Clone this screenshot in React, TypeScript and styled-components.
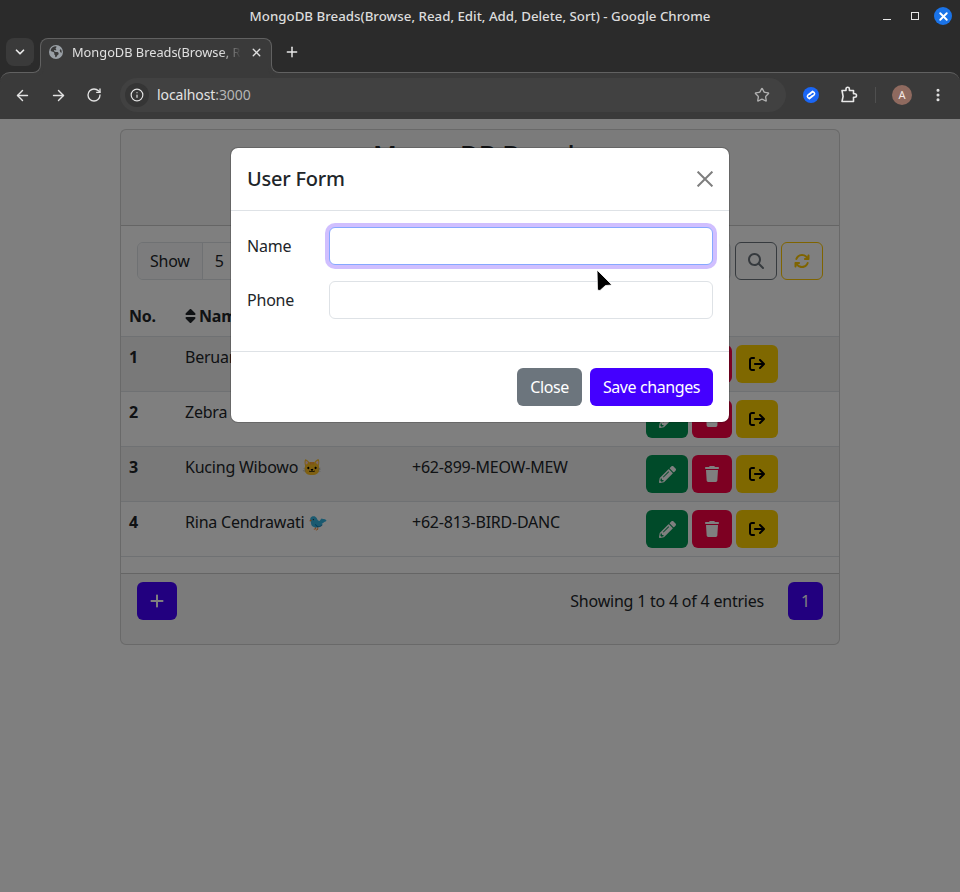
import styled, { createGlobalStyle } from 'styled-components';
import { FaPencilAlt } from 'react-icons/fa';
import { FaArrowRightFromBracket, FaArrowsRotate, FaEarthAmericas, FaMagnifyingGlass, FaPlus, FaSort, FaTrash } from 'react-icons/fa6';
import { ArrowLeft, ArrowRight, ChevronDown, EllipsisVertical, Info, Plus, RotateCw, Star, X } from 'lucide-react';

const GlobalStyle = createGlobalStyle`
  html, body {
    margin: 0;
    height: 100%;
    overflow: hidden;
  }
  body {
    font-family: "Noto Sans", "Open Sans", sans-serif;
    font-size: 16px;
    line-height: 24px;
    letter-spacing: -0.22px;
    color: #212529;
    background: #fff;
  }
  * {
    box-sizing: border-box;
  }
`;

const Shell = styled.div`
  display: flex;
  flex-direction: column;
  height: 892px;
`;

const BrowserChrome = styled.header`
  height: 119px;
  flex: none;
  background: #2b2b2b;
  color: #e3e3e3;
  display: flex;
  flex-direction: column;
  letter-spacing: 0;
`;

const TitleBar = styled.div`
  height: 38px;
  flex: none;
  display: grid;
  grid-template-columns: 1fr auto 1fr;
  align-items: center;
  padding: 0 8px 6px;
  font-size: 13.3px;
  font-weight: 500;
  color: #dcdcdc;
`;

const WindowTitle = styled.div`
  grid-column: 2;
  white-space: nowrap;
`;

const WindowControls = styled.div`
  grid-column: 3;
  justify-self: end;
  display: flex;
  align-items: center;
`;

const MinimizeIcon = styled.span`
  width: 8px;
  height: 1px;
  background: #e8e8e8;
  margin: 7px 20px 0 0;
`;

const MaximizeIcon = styled.span`
  width: 8px;
  height: 8px;
  border: 1px solid #e8e8e8;
  margin-right: 15px;
`;

const CloseWindow = styled.span`
  width: 18px;
  height: 18px;
  border-radius: 50%;
  background: #1a73e8;
  color: #fff;
  display: flex;
  align-items: center;
  justify-content: center;
`;

const TabStrip = styled.div`
  height: 34px;
  flex: none;
  display: flex;
  align-items: flex-start;
  padding-left: 6px;
  position: relative;
  z-index: 1;
`;

const TabListButton = styled.span`
  width: 28px;
  height: 28px;
  border-radius: 8px;
  background: #3a3a3a;
  color: #e8e8e8;
  display: flex;
  align-items: center;
  justify-content: center;
  margin-right: 6px;
`;

const Tab = styled.div`
  width: 232px;
  height: 35px;
  position: relative;
  background: #3a3a3a;
  border: 1px solid #616161;
  border-bottom: 0;
  border-radius: 8px 8px 0 0;
  display: flex;
  align-items: center;
  gap: 9px;
  padding: 0 8px 8px 8px;
  font-size: 12.8px;
  color: #e0e0e0;

  &::before,
  &::after {
    content: '';
    position: absolute;
    bottom: 0;
    width: 9px;
    height: 9px;
    background: #2b2b2b;
    border: 0 solid #616161;
    border-bottom-width: 1px;
  }
  &::before {
    left: -10px;
    border-right-width: 1px;
    border-bottom-right-radius: 8px;
    box-shadow: 3px 3px 0 #3a3a3a;
  }
  &::after {
    right: -10px;
    border-left-width: 1px;
    border-bottom-left-radius: 8px;
    box-shadow: -3px 3px 0 #3a3a3a;
  }
`;

const TabTitle = styled.span`
  flex: 1;
  overflow: hidden;
  white-space: nowrap;
  -webkit-mask-image: linear-gradient(to right, #000 88%, transparent 100%);
  mask-image: linear-gradient(to right, #000 88%, transparent 100%);
`;

const NewTab = styled.span`
  margin: 6px 0 0 12px;
  display: flex;
  color: #e8e8e8;
`;

const Toolbar = styled.div`
  height: 47px;
  flex: none;
  background: #3a3a3a;
  border-top: 1px solid #616161;
  border-radius: 10px 10px 0 0;
  display: flex;
  align-items: center;
  padding: 0 14px 2px 14px;
  color: #e3e3e3;
`;

const NavIcons = styled.div`
  display: flex;
  align-items: center;
  gap: 19px;
  margin-right: 18px;
`;

const Omnibox = styled.div`
  width: 666px;
  height: 34px;
  border-radius: 17px;
  background: #414141;
  display: flex;
  align-items: center;
  padding: 0 16px 0 5px;
  font-size: 14px;
  color: #e3e3e3;
`;

const InfoChip = styled.span`
  width: 24px;
  height: 24px;
  border-radius: 50%;
  background: #353535;
  display: flex;
  align-items: center;
  justify-content: center;
  margin-right: 8px;
`;

const Url = styled.span`
  flex: 1;
  letter-spacing: -0.1px;
  span {
    color: #b5b5b5;
  }
`;

const Extensions = styled.div`
  flex: 1;
  display: flex;
  align-items: center;
  justify-content: flex-end;
`;

const ExtensionSlot = styled.span<{ $gap: number }>`
  display: flex;
  align-items: center;
  margin-right: ${(p) => p.$gap}px;
`;

const Divider = styled.span`
  width: 1px;
  height: 16px;
  background: #4f4f4f;
`;

const Avatar = styled.span`
  width: 20px;
  height: 20px;
  border-radius: 50%;
  background: #8f6a5f;
  color: #f4e8e4;
  font-size: 11px;
  display: flex;
  align-items: center;
  justify-content: center;
`;

const PageArea = styled.main`
  flex: 1;
  position: relative;
  overflow: hidden;
  padding-top: 10px;
`;

const Card = styled.section`
  width: 720px;
  margin: 0 auto;
  border: 1px solid rgba(0, 0, 0, 0.175);
  border-radius: 6px;
`;

const CardHeader = styled.div`
  height: 96px;
  padding: 6px 16px;
  background: rgba(0, 0, 0, 0.03);
  border-bottom: 1px solid rgba(0, 0, 0, 0.175);
  text-align: center;
  h2 {
    margin: 0;
    font-size: 26px;
    font-weight: 500;
    line-height: 36px;
  }
`;

const CardBody = styled.div`
  padding-top: 16px;
`;

const Controls = styled.div`
  display: flex;
  justify-content: space-between;
  padding: 0 16px;
  margin-bottom: 16px;
`;

const InputGroup = styled.div`
  display: flex;
  height: 38px;
  border: 1px solid #dee2e6;
  border-radius: 6px;
  overflow: hidden;
`;

const GroupText = styled.span<{ $shaded?: boolean }>`
  padding: 6px 12px;
  background: ${(p) => (p.$shaded ? '#f8f9fa' : 'transparent')};
  border-right: 1px solid #dee2e6;
`;

const SearchRow = styled.div`
  display: flex;
  gap: 4px;
`;

const SearchInput = styled.div`
  width: 240px;
  height: 38px;
  border: 1px solid #dee2e6;
  border-radius: 6px;
`;

const OutlineButton = styled.button<{ $color: string }>`
  width: 42px;
  height: 38px;
  padding: 0;
  background: transparent;
  border: 1px solid ${(p) => p.$color};
  border-radius: 6px;
  color: ${(p) => p.$color};
  display: flex;
  align-items: center;
  justify-content: center;
  font-size: 16px;
`;

const Table = styled.table`
  width: 100%;
  border-collapse: collapse;
  table-layout: fixed;
  margin-bottom: 16px;
  color: #212529;
  th, td {
    padding: 8px;
    border-bottom: 1px solid #dee2e6;
    text-align: left;
    vertical-align: top;
  }
  th {
    font-weight: 700;
  }
  tbody tr:nth-child(odd) td {
    background: rgba(0, 0, 0, 0.05);
  }
  td:first-child {
    font-weight: 700;
  }
`;

const SortIcon = styled(FaSort)`
  width: 11px;
  height: 16px;
  vertical-align: -2px;
  margin-right: 3px;
`;

const Actions = styled.div`
  display: flex;
  gap: 4px;
`;

const SolidButton = styled.button<{ $bg: string; $fg?: string; $width?: number }>`
  width: ${(p) => p.$width ?? 42}px;
  height: 38px;
  padding: 0;
  background: ${(p) => p.$bg};
  color: ${(p) => p.$fg ?? '#fff'};
  border: 0;
  border-radius: 6px;
  display: flex;
  align-items: center;
  justify-content: center;
  font: inherit;
`;

const CardFooter = styled.div`
  height: 71px;
  background: rgba(0, 0, 0, 0.03);
  border-top: 1px solid rgba(0, 0, 0, 0.175);
  padding: 8px 16px 24px;
  display: flex;
  align-items: center;
  justify-content: space-between;
`;

const PageInfo = styled.div`
  display: flex;
  align-items: center;
  gap: 24px;
`;

const Backdrop = styled.div`
  position: absolute;
  inset: 0;
  background: rgba(0, 0, 0, 0.5);
`;

const Modal = styled.div`
  width: 500px;
  margin: 28px auto 0;
  background: #fff;
  border: 1px solid rgba(0, 0, 0, 0.175);
  border-radius: 8px;
  background-clip: padding-box;
`;

const ModalHeader = styled.div`
  height: 63px;
  padding: 16px;
  display: flex;
  align-items: center;
  justify-content: space-between;
  border-bottom: 1px solid #dee2e6;
  h5 {
    margin: 0;
    font-size: 20px;
    font-weight: 500;
    line-height: 30px;
  }
`;

const CloseIcon = styled.svg`
  width: 16px;
  height: 16px;
  opacity: 0.5;
`;

const ModalBody = styled.div`
  padding: 16px 16px 0;
  height: 141px;
  border-bottom: 1px solid #dee2e6;
`;

const FormRow = styled.div`
  display: grid;
  grid-template-columns: 82px 1fr;
  align-items: center;
  margin-bottom: 16px;
`;

const Field = styled.input<{ $focused?: boolean }>`
  height: 38px;
  width: 100%;
  border-radius: 6px;
  outline: 0;
  border: 1px solid ${(p) => (p.$focused ? '#86a8ff' : '#dee2e6')};
  box-shadow: ${(p) => (p.$focused ? '0 0 0 4px rgba(68, 0, 255, 0.25)' : 'none')};
`;

const ModalFooter = styled.div`
  padding: 16px;
  display: flex;
  justify-content: flex-end;
  gap: 8px;
`;

const TextButton = styled.button<{ $bg: string; $width: number }>`
  height: 38px;
  width: ${(p) => p.$width}px;
  padding: 0;
  background: ${(p) => p.$bg};
  color: #fff;
  border: 0;
  border-radius: 6px;
  font: inherit;
  letter-spacing: -0.4px;
`;

const Cursor = styled.svg`
  position: absolute;
  left: 595px;
  top: 149px;
  width: 20px;
  height: 24px;
`;

const users = [
  { name: 'Beruang', phone: '' },
  { name: 'Zebra', phone: '' },
  { name: 'Kucing Wibowo 🐱', phone: '+62-899-MEOW-MEW' },
  { name: 'Rina Cendrawati 🐦', phone: '+62-813-BIRD-DANC' },
];

export default function App() {
  return (
    <Shell>
      <GlobalStyle />
      <BrowserChrome>
        <TitleBar>
          <WindowTitle>MongoDB Breads(Browse, Read, Edit, Add, Delete, Sort) - Google Chrome</WindowTitle>
          <WindowControls>
            <MinimizeIcon />
            <MaximizeIcon />
            <CloseWindow>
              <X size={13} strokeWidth={3.5} />
            </CloseWindow>
          </WindowControls>
        </TitleBar>
        <TabStrip>
          <TabListButton>
            <ChevronDown size={14} strokeWidth={3} />
          </TabListButton>
          <Tab>
            <FaEarthAmericas size={14} color="#9aa0a6" />
            <TabTitle>MongoDB Breads(Browse, Read, Edit, Add, Delete, Sort)</TabTitle>
            <X size={13} strokeWidth={2.5} />
          </Tab>
          <NewTab>
            <Plus size={16} strokeWidth={2.2} />
          </NewTab>
        </TabStrip>
        <Toolbar>
          <NavIcons>
            <ArrowLeft size={17} />
            <ArrowRight size={17} />
            <RotateCw size={16} />
          </NavIcons>
          <Omnibox>
            <InfoChip>
              <Info size={14} />
            </InfoChip>
            <Url>
              localhost<span>:3000</span>
            </Url>
            <Star size={16} color="#b0b0b0" />
          </Omnibox>
          <Extensions>
            <ExtensionSlot $gap={21}>
              <svg width="16" height="16" viewBox="0 0 16 16">
                <circle cx="8" cy="8" r="8" fill="#1a66f5" />
                <path d="M9.600 4.300 4.900 8.100a1.700 1.700 0 0 0 2.300 2.500l2-1.700M6.400 11.700l4.700-3.800a1.700 1.700 0 0 0-2.300-2.500l-2 1.700" fill="none" stroke="#fff" strokeWidth="1.500" strokeLinecap="round" />
              </svg>
            </ExtensionSlot>
            <ExtensionSlot $gap={17}>
              <svg width="18" height="18" viewBox="0 0 18 18" fill="none" stroke="#e8e8e8" strokeWidth="1.600" strokeLinejoin="round">
                <path d="M2 4.500h4V3a1.700 1.700 0 0 1 3.400 0v1.500h4.100v3.300h1.300a1.700 1.700 0 0 1 0 3.400h-1.300v4.300H2l1.100-5.200L2 4.500Z" />
              </svg>
            </ExtensionSlot>
            <ExtensionSlot $gap={16}>
              <Divider />
            </ExtensionSlot>
            <ExtensionSlot $gap={18}>
              <Avatar>A</Avatar>
            </ExtensionSlot>
            <EllipsisVertical size={16} strokeWidth={2.6} />
          </Extensions>
        </Toolbar>
      </BrowserChrome>

      <PageArea>
        <Card>
          <CardHeader>
            <h2>MongoDB Breads</h2>
          </CardHeader>
          <CardBody>
            <Controls>
              <InputGroup>
                <GroupText $shaded>Show</GroupText>
                <GroupText>5</GroupText>
                <GroupText $shaded>entries</GroupText>
              </InputGroup>
              <SearchRow>
                <SearchInput />
                <OutlineButton $color="#6c757d">
                  <FaMagnifyingGlass />
                </OutlineButton>
                <OutlineButton $color="#ffc800">
                  <FaArrowsRotate />
                </OutlineButton>
              </SearchRow>
            </Controls>
            <Table>
              <colgroup>
                <col width={56} />
                <col width={227} />
                <col width={234} />
                <col />
              </colgroup>
              <thead>
                <tr>
                  <th>No.</th>
                  <th>
                    <SortIcon />
                    Name
                  </th>
                  <th>
                    <SortIcon />
                    Phone
                  </th>
                  <th>Actions</th>
                </tr>
              </thead>
              <tbody>
                {users.map((user, i) => (
                  <tr key={user.name}>
                    <td>{i + 1}</td>
                    <td>{user.name}</td>
                    <td>{user.phone}</td>
                    <td>
                      <Actions>
                        <SolidButton $bg="#009552">
                          <FaPencilAlt size={17} />
                        </SolidButton>
                        <SolidButton $bg="#fb0044" $width={40}>
                          <FaTrash />
                        </SolidButton>
                        <SolidButton $bg="#ffd000" $fg="#000">
                          <FaArrowRightFromBracket />
                        </SolidButton>
                      </Actions>
                    </td>
                  </tr>
                ))}
              </tbody>
            </Table>
          </CardBody>
          <CardFooter>
            <SolidButton $bg="#4400ff" $width={40}>
              <FaPlus />
            </SolidButton>
            <PageInfo>
              <span>Showing 1 to 4 of 4 entries</span>
              <SolidButton $bg="#4400ff" $width={35}>
                1
              </SolidButton>
            </PageInfo>
          </CardFooter>
        </Card>

        <Backdrop>
          <Modal>
            <ModalHeader>
              <h5>User Form</h5>
              <CloseIcon viewBox="0 0 16 16">
                <path d="M.6.6 15.400 15.400M15.400.6.6 15.400" stroke="#000" strokeWidth="2" fill="none" />
              </CloseIcon>
            </ModalHeader>
            <ModalBody>
              <FormRow>
                <label>Name</label>
                <Field $focused />
              </FormRow>
              <FormRow>
                <label>Phone</label>
                <Field />
              </FormRow>
            </ModalBody>
            <ModalFooter>
              <TextButton $bg="#6c757d" $width={65}>Close</TextButton>
              <TextButton $bg="#4400ff" $width={123}>Save changes</TextButton>
            </ModalFooter>
          </Modal>
        </Backdrop>
        <Cursor viewBox="0 0 20 24">
          <path d="M2 2 17 17l-6.500.5L5 22.500l-2.500-.5L2 2Z" fill="#000" stroke="#fff" strokeWidth="0.8" strokeLinejoin="round" />
        </Cursor>
      </PageArea>
    </Shell>
  );
}
